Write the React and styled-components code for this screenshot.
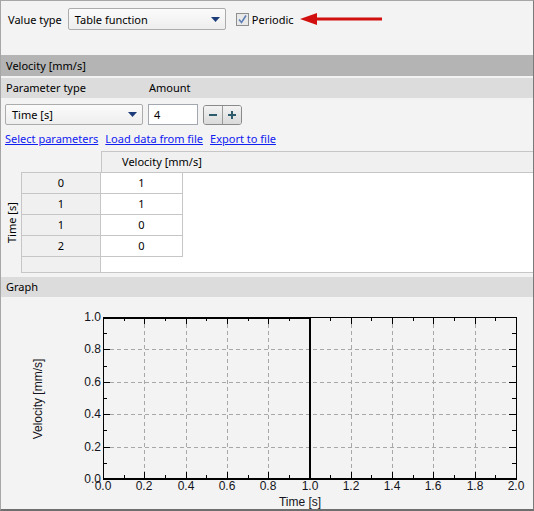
import React from 'react';
import styled, { createGlobalStyle } from 'styled-components';

const GlobalStyle = createGlobalStyle`
  body {
    margin: 0;
    font-family: "Noto Sans", "DejaVu Sans", sans-serif;
    font-size: 11px;
    color: #000;
  }
`;

const Frame = styled.div`
  box-sizing: border-box;
  width: 534px;
  height: 511px;
  background: #f3f3f3;
  border-top: 1px solid #a6a6a6;
  border-left: 1px solid #a6a6a6;
  border-right: 1px solid #7a7a7a;
  border-bottom: 2px solid #6e6e6e;
  display: flex;
  flex-direction: column;
  overflow: hidden;
  & > * {
    flex-shrink: 0;
  }
`;

const TopBar = styled.div`
  height: 54px;
  box-sizing: border-box;
  padding: 7px 0 0 7px;
  display: flex;
  align-items: flex-start;
`;

const TopRow = styled.div`
  height: 22px;
  display: flex;
  align-items: center;
`;

const Label = styled.span`
  white-space: nowrap;
  margin-right: ${p => p.gap || 0}px;
`;

const Drop = styled.div`
  box-sizing: border-box;
  width: ${p => p.w}px;
  height: ${p => p.h || 22}px;
  border: 1px solid #acacac;
  border-radius: 2px;
  background: linear-gradient(#fbfbfb, #eeeeee);
  display: flex;
  align-items: center;
  justify-content: space-between;
  padding: 0 5px 0 6px;
`;

const CheckWrap = styled.label`
  display: flex;
  align-items: center;
  margin-left: 10px;
  gap: 3px;
`;

const CheckBox = styled.span`
  box-sizing: border-box;
  width: 13px;
  height: 13px;
  border: 1px solid #8e8f8f;
  background: #e9e9e9;
  display: flex;
  align-items: center;
  justify-content: center;
`;

const Pointer = styled.svg`
  margin-left: 6px;
  display: block;
`;

const DarkBar = styled.div`
  height: 21px;
  line-height: 21px;
  background: #b4b4b4;
  padding-left: 5px;
  margin-bottom: 2px;
`;

const LightBar = styled.div`
  height: 20px;
  line-height: 20px;
  background: #dcdcdc;
  padding-left: 5px;
  display: flex;
`;

const Cell = styled.span`
  width: ${p => p.w}px;
`;

const Controls = styled.div`
  margin-top: 6px;
  height: 21px;
  padding-left: 4px;
  display: flex;
  align-items: center;
  gap: 5px;
`;

const Input = styled.div`
  box-sizing: border-box;
  width: 50px;
  height: 21px;
  background: #fff;
  border: 1px solid #a3a8b0;
  padding-left: 5px;
  line-height: 19px;
`;

const Spin = styled.div`
  display: flex;
  box-sizing: border-box;
  height: 20px;
  border: 1px solid #8a8a8a;
  border-radius: 3px;
  overflow: hidden;
`;

const SpinBtn = styled.div`
  width: 18px;
  display: flex;
  align-items: center;
  justify-content: center;
  background: linear-gradient(#f3f3f3, #dadada);
  border-left: ${p => (p.first ? 'none' : '1px solid #9a9a9a')};
`;

const Links = styled.div`
  height: 26px;
  padding-left: 4px;
  display: flex;
  align-items: center;
  gap: 7px;
`;

const Link = styled.a`
  color: #1020f0;
  text-decoration: underline;
  white-space: nowrap;
  cursor: pointer;
`;

const HeadRow = styled.div`
  height: 21px;
  display: flex;
  padding-left: 100px;
`;

const HeadCell = styled.div`
  flex: 1;
  box-sizing: border-box;
  border-top: 1px solid #c6c6c6;
  border-left: 1px solid #c6c6c6;
  background: #f0f0f0;
  padding-left: 20px;
  line-height: 20px;
`;

const Body = styled.div`
  display: flex;
  height: 101px;
`;

const SideLabel = styled.div`
  width: 20px;
  display: flex;
  align-items: center;
  justify-content: center;
  writing-mode: vertical-rl;
  transform: rotate(180deg);
  white-space: nowrap;
`;

const Grid = styled.div`
  flex: 1;
  box-sizing: border-box;
  background: #fff;
  border-top: 1px solid #c6c6c6;
  border-left: 1px solid #c6c6c6;
  border-bottom: 1px solid #c6c6c6;
  display: grid;
  grid-template-columns: 79px 82px 1fr;
  grid-template-rows: repeat(4, 21px) 15px;
`;

const RowHead = styled.div`
  grid-column: 1;
  box-sizing: border-box;
  background: #f0f0f0;
  border-right: 1px solid #c6c6c6;
  border-bottom: ${p => (p.last ? 'none' : '1px solid #c6c6c6')};
  text-align: center;
  line-height: 20px;
`;

const ValueCell = styled.div`
  grid-column: 2;
  box-sizing: border-box;
  border-right: 1px solid #c6c6c6;
  border-bottom: 1px solid #c6c6c6;
  text-align: center;
  line-height: 20px;
`;

const Filler = styled.div`
  grid-column: ${p => p.col};
  grid-row: ${p => p.row};
`;

const GraphBar = styled(LightBar)`
  margin-top: 4px;
`;

const ChartArea = styled.div`
  height: 212px;
  & > svg {
    display: block;
  }
`;

const rows = [
  ['0', '1'],
  ['1', '1'],
  ['1', '0'],
  ['2', '0'],
];

const L = 102;
const R = 515;
const T = 20;
const B = 182;
const xs = v => L + ((R - L) * v) / 2;
const ys = v => B - (B - T) * v;

function Chart() {
  const ticks = [];
  const grid = [];
  const labels = [];
  for (let i = 0; i <= 20; i++) {
    const x = Math.round(xs(i / 10));
    const len = i % 2 === 0 ? 7 : 4;
    ticks.push(<line key={'b' + i} x1={x} x2={x} y1={B} y2={B - len} />);
    ticks.push(<line key={'t' + i} x1={x} x2={x} y1={T} y2={T + len} />);
    if (i % 2 === 0) {
      if (i > 0 && i < 20) grid.push(<line key={'gx' + i} x1={x} x2={x} y1={T} y2={B} />);
      labels.push(
        <text key={'lx' + i} x={x} y={193} textAnchor="middle">
          {(i / 10).toFixed(1)}
        </text>
      );
    }
  }
  for (let i = 0; i <= 10; i++) {
    const y = Math.round(ys(i / 10));
    const len = i % 2 === 0 ? 7 : 4;
    ticks.push(<line key={'l' + i} x1={L} x2={L + len} y1={y} y2={y} />);
    ticks.push(<line key={'r' + i} x1={R} x2={R - len} y1={y} y2={y} />);
    if (i % 2 === 0) {
      if (i > 0 && i < 10) grid.push(<line key={'gy' + i} x1={L} x2={R} y1={y} y2={y} />);
      labels.push(
        <text key={'ly' + i} x={100} y={y + 4} textAnchor="end">
          {(i / 10).toFixed(1)}
        </text>
      );
    }
  }
  const mid = Math.round(xs(1));
  return (
    <svg width="532" height="212" viewBox="0 0 532 212">
      <g stroke="#a8a8a8" strokeDasharray="4 3" strokeWidth="1" shapeRendering="crispEdges">
        {grid}
      </g>
      <g stroke="#000" strokeWidth="1" shapeRendering="crispEdges">
        {ticks}
        <line x1={L + 0.5} x2={L + 0.5} y1={T} y2={B} />
        <line x1={R + 0.5} x2={R + 0.5} y1={T} y2={B + 1} />
        <line x1={L} x2={R} y1={T + 0.5} y2={T + 0.5} />
      </g>
      <polyline
        points={`${L},${T + 1} ${mid},${T + 1} ${mid},${B} ${R + 1},${B}`}
        fill="none"
        stroke="#000"
        strokeWidth="2"
      />
      <line x1={L} x2={mid} y1={B} y2={B} stroke="#000" strokeWidth="2" />
      <g fontFamily='"Liberation Sans", Arial, sans-serif' fontSize="12" fill="#141420">
        {labels}
        <text x={299} y={209} textAnchor="middle">Time [s]</text>
        <text transform="translate(41 102) rotate(-90)" textAnchor="middle">Velocity [mm/s]</text>
      </g>
    </svg>
  );
}

const Caret = () => (
  <svg width="9" height="5" viewBox="0 0 9 5">
    <path d="M0 0 H9 L4.5 5 Z" fill="#1d3d7a" />
  </svg>
);

export default function App() {
  return (
    <Frame>
      <GlobalStyle />
      <TopBar>
        <TopRow>
          <Label gap={6}>Value type</Label>
          <Drop w={158}>
            <span>Table function</span>
            <Caret />
          </Drop>
          <CheckWrap>
            <CheckBox>
              <svg width="11" height="11" viewBox="0 0 11 11">
                <path d="M2 5.5 L4.5 8.5 L9 1.5" fill="none" stroke="#5d7fb5" strokeWidth="1.6" />
              </svg>
            </CheckBox>
            <span>Periodic</span>
          </CheckWrap>
          <Pointer width="82" height="14" viewBox="0 0 82 14">
            <path d="M0 7 L17 1 L17 13 Z" fill="#d10f0f" />
            <rect x="15" y="5.5" width="67" height="3" fill="#d10f0f" />
          </Pointer>
        </TopRow>
      </TopBar>

      <DarkBar>Velocity [mm/s]</DarkBar>
      <LightBar>
        <Cell w={143}>Parameter type</Cell>
        <Cell>Amount</Cell>
      </LightBar>

      <Controls>
        <Drop w={138} h={21}>
          <span>Time [s]</span>
          <Caret />
        </Drop>
        <Input>4</Input>
        <Spin>
          <SpinBtn first>
            <svg width="10" height="10" viewBox="0 0 10 10">
              <rect x="1" y="4" width="8" height="2" fill="#2e5c6c" />
            </svg>
          </SpinBtn>
          <SpinBtn>
            <svg width="10" height="10" viewBox="0 0 10 10">
              <rect x="1" y="4" width="8" height="2" fill="#2e5c6c" />
              <rect x="4" y="1" width="2" height="8" fill="#2e5c6c" />
            </svg>
          </SpinBtn>
        </Spin>
      </Controls>

      <Links>
        <Link>Select parameters</Link>
        <Link>Load data from file</Link>
        <Link>Export to file</Link>
      </Links>

      <HeadRow>
        <HeadCell>Velocity [mm/s]</HeadCell>
      </HeadRow>
      <Body>
        <SideLabel>Time [s]</SideLabel>
        <Grid>
          {rows.map((r, i) => (
            <React.Fragment key={i}>
              <RowHead style={{ gridRow: i + 1 }}>{r[0]}</RowHead>
              <ValueCell style={{ gridRow: i + 1 }}>{r[1]}</ValueCell>
            </React.Fragment>
          ))}
          <RowHead last style={{ gridRow: 5 }} />
          <Filler col="3" row="1 / 6" />
        </Grid>
      </Body>

      <GraphBar>Graph</GraphBar>
      <ChartArea>
        <Chart />
      </ChartArea>
    </Frame>
  );
}
